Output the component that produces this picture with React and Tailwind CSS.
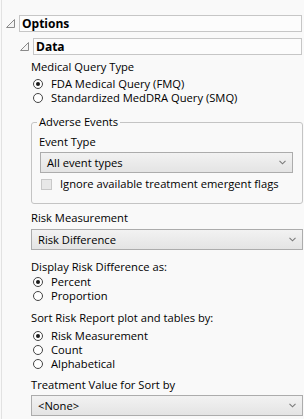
import React from 'react';

const font = { fontFamily: '"Open Sans", "Noto Sans", sans-serif' };

function Toggle() {
  return (
    <svg width="9" height="9" viewBox="0 0 9 9" className="shrink-0">
      <polygon points="0.5,8.5 8.5,8.5 8.5,0.5" fill="#f4f4f4" stroke="#8a8a8a" strokeWidth="1" />
    </svg>
  );
}

function Header({ label, indent }) {
  return (
    <div className={`flex items-center h-[17px] ${indent}`}>
      <div className="w-[14px] flex justify-start pl-px">
        <Toggle />
      </div>
      <div className="flex-1 h-[17px] mr-[2px] border border-[#c6c6c6] bg-[#fcfcfc] flex items-center pl-[2px] font-bold text-[12px] text-black">
        {label}
      </div>
    </div>
  );
}

function Radio({ label, checked }) {
  return (
    <div className="flex items-center h-[14px] pl-[2px]">
      <span className="w-[10px] h-[10px] rounded-full border border-[#444] bg-white flex items-center justify-center">
        {checked && <span className="w-[4px] h-[4px] rounded-full bg-[#1a1a1a]"></span>}
      </span>
      <span className="ml-[8px]">{label}</span>
    </div>
  );
}

function Chevron() {
  return (
    <svg width="7" height="5" viewBox="0 0 7 5">
      <polyline points="0.5,0.8 3.5,3.8 6.5,0.8" fill="none" stroke="#7a7a7a" strokeWidth="1.1" />
    </svg>
  );
}

function Select({ value, className }) {
  return (
    <div className={`h-[21px] border border-[#acacac] bg-gradient-to-b from-[#f2f2f2] to-[#e4e4e4] flex items-center justify-between pl-[6px] pr-[6px] ${className}`}>
      <span>{value}</span>
      <Chevron />
    </div>
  );
}

export default function App() {
  return (
    <div className="w-[304px] h-[419px] bg-[#f9f9f9] overflow-hidden text-[11.2px] leading-[14px] text-black" style={font}>
      <div className="ml-px h-full border-l border-[#e2e2e2] pt-[15px]">
        <Header label="Options" indent="pl-[3px]" />
        <div className="mt-[6px]">
          <Header label="Data" indent="pl-[17px]" />
        </div>

        <div className="pl-[29px] pr-[1px]">
          <div className="mt-[5px] h-[14px]">Medical Query Type</div>
          <div className="mt-[3px]">
            <Radio label="FDA Medical Query (FMQ)" checked />
            <Radio label="Standardized MedDRA Query (SMQ)" />
          </div>

          <fieldset className="mt-[10px] border border-[#c4c4c4] rounded-[3px] px-[7px] pb-[12px]">
            <legend className="px-[2px] ml-[-2px] leading-[14px]">Adverse Events</legend>
            <div className="mt-[6px] h-[14px]">Event Type</div>
            <Select value="All event types" className="mt-[3px] mr-[2px] ml-px" />
            <div className="flex items-center h-[14px] mt-[4px] ml-[2px]">
              <span className="w-[11px] h-[11px] border border-[#c8c8c8] bg-[#e8e8e8]"></span>
              <span className="ml-[8px]">Ignore available treatment emergent flags</span>
            </div>
          </fieldset>

          <div className="mt-[7px] h-[14px]">Risk Measurement</div>
          <Select value="Risk Difference" className="mt-[4px]" />

          <div className="mt-[10px] h-[14px]">Display Risk Difference as:</div>
          <div className="mt-[1px]">
            <Radio label="Percent" checked />
            <Radio label="Proportion" />
          </div>

          <div className="mt-[8px] h-[14px]">Sort Risk Report plot and tables by:</div>
          <div className="mt-[4px]">
            <Radio label="Risk Measurement" checked />
            <Radio label="Count" />
            <Radio label="Alphabetical" />
          </div>

          <div className="mt-[7px] h-[14px]">Treatment Value for Sort by</div>
          <Select value="<None>" className="mt-[3px]" />
        </div>
      </div>
    </div>
  );
}
